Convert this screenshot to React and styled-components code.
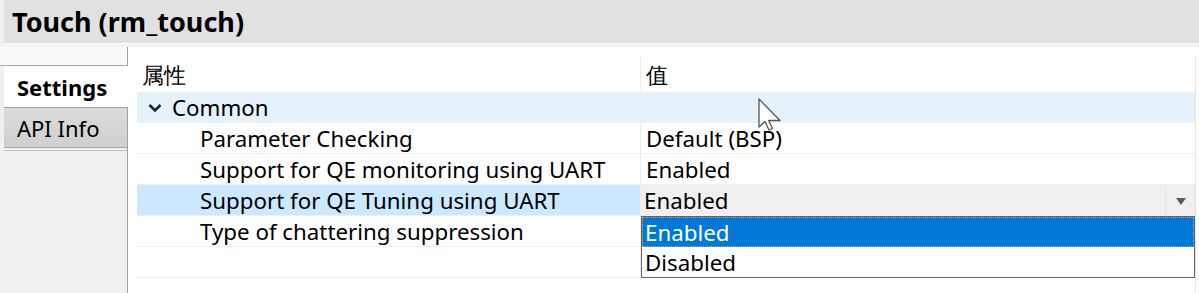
import styled, { createGlobalStyle } from "styled-components";

const GlobalStyle = createGlobalStyle`
  html, body {
    margin: 0;
    padding: 0;
    background: #f0f0f0;
  }
  * {
    box-sizing: border-box;
  }
`;

const Page = styled.div`
  position: relative;
  width: 1199px;
  height: 293px;
  overflow: hidden;
  background: #f0f0f0;
  padding-left: 4px;
  font-family: "Noto Sans", "Open Sans", sans-serif;
  color: #000;
  display: flex;
  flex-direction: column;
`;

const Header = styled.div`
  height: 44px;
  background: #e1e1e1;
  border-bottom: 1px solid #fbfbfb;
  display: flex;
  align-items: center;
  padding-left: 8px;
  flex-shrink: 0;
`;

const Title = styled.h1`
  margin: 0;
  font-size: 27px;
  font-weight: 700;
`;

const HeaderGap = styled.div`
  height: 3px;
  background: #f3f3f3;
  flex-shrink: 0;
  margin-left: -4px;
`;

const Body = styled.div`
  flex: 1;
  display: flex;
  margin-left: -4px;
`;

const Sidebar = styled.div`
  width: 128px;
  padding-left: 4px;
  border-right: 1px solid #a0a0a0;
  display: flex;
  flex-direction: column;
  background: #f0f0f0;
  flex-shrink: 0;
`;

const TabTop = styled.div`
  height: 19px;
  background: #fafafa;
  border-bottom: 1px solid #a8a8a8;
  margin-left: -4px;
`;

const Tab = styled.div`
  height: ${(p) => (p.$active ? "42px" : "40px")};
  display: flex;
  align-items: center;
  padding-left: 13px;
  font-size: 22px;
  font-weight: ${(p) => (p.$active ? 700 : 400)};
  background: ${(p) =>
    p.$active ? "#ffffff" : "linear-gradient(#dcdcdc, #cfcfcf)"};
  border-bottom: 1px solid #a8a8a8;
  margin-right: ${(p) => (p.$active ? "-1px" : "0")};
`;

const TabFoot = styled.div`
  height: 3px;
  border-bottom: 1px solid #c4c4c4;
`;

const Content = styled.div`
  flex: 1;
  background: #ffffff;
  padding: 9px 3px 0 9px;
`;

const Table = styled.div`
  position: relative;
  border-right: 1px solid #e3e3e3;
  height: 100%;
  display: flex;
  flex-direction: column;
`;

const Row = styled.div`
  display: grid;
  grid-template-columns: 503px 1fr;
  height: ${(p) => (p.$head ? "36px" : "31px")};
  border-bottom: 1px solid ${(p) => (p.$head ? "transparent" : "#efefef")};
  background: ${(p) => (p.$group ? "#e5f1fb" : "transparent")};
  font-size: 22.3px;
  line-height: 1;
`;

const Cell = styled.div`
  display: flex;
  align-items: center;
  padding-top: 2px;
  padding-left: ${(p) => p.$indent || 5}px;
  background: ${(p) => (p.$selected ? "#cce8ff" : "transparent")};
  border-left: ${(p) => (p.$value ? "1px solid #ececec" : "none")};
  white-space: nowrap;
`;

const HeadCell = styled(Cell)`
  align-items: flex-end;
  padding-bottom: 5px;
`;

const Chevron = styled.svg`
  width: 14px;
  height: 10px;
  margin-right: 10px;
`;

const Combo = styled.div`
  display: flex;
  background: #f0f0f0;
  border-left: 1px solid #ececec;
  margin-bottom: -1px;
`;

const ComboText = styled.div`
  flex: 1;
  display: flex;
  align-items: center;
  padding-top: 2px;
  padding-left: 3px;
`;

const ComboButton = styled.div`
  width: 30px;
  border-left: 1px solid #e6e6e6;
  display: flex;
  align-items: center;
  justify-content: center;
`;

const Arrow = styled.div`
  width: 0;
  height: 0;
  border-left: 5px solid transparent;
  border-right: 5px solid transparent;
  border-top: 7px solid #5a5a5a;
  margin-top: 2px;
`;

const List = styled.div`
  position: absolute;
  left: 504px;
  top: 160px;
  width: 554px;
  background: #ffffff;
  border: 1px solid #646464;
  display: flex;
  flex-direction: column;
  font-size: 22.3px;
  line-height: 1;
`;

const Option = styled.div`
  height: 30px;
  display: flex;
  align-items: center;
  padding-top: 3px;
  padding-left: 3px;
  background: ${(p) => (p.$selected ? "#0078d7" : "#ffffff")};
  color: ${(p) => (p.$selected ? "#ffffff" : "#000000")};
  outline: ${(p) => (p.$selected ? "1px dotted #e0a060" : "none")};
  outline-offset: -1px;
`;

const Cursor = styled.svg`
  position: absolute;
  left: 758px;
  top: 98px;
  width: 24px;
  height: 34px;
`;

const rows = [
  { name: "Parameter Checking", value: "Default (BSP)" },
  { name: "Support for QE monitoring using UART", value: "Enabled" },
  { name: "Support for QE Tuning using UART", value: "Enabled", selected: true },
  { name: "Type of chattering suppression", value: "" },
  { name: "", value: "" },
];

export default function App() {
  return (
    <>
      <GlobalStyle />
      <Page>
        <Header>
          <Title>Touch (rm_touch)</Title>
        </Header>
        <HeaderGap />
        <Body>
          <Sidebar>
            <TabTop />
            <Tab $active>Settings</Tab>
            <Tab>API Info</Tab>
            <TabFoot />
          </Sidebar>
          <Content>
            <Table>
              <Row $head>
                <HeadCell>属性</HeadCell>
                <HeadCell $value>值</HeadCell>
              </Row>
              <Row $group>
                <Cell $indent={11}>
                  <Chevron viewBox="0 0 14 10">
                    <path
                      d="M1.5 2 L7 7.5 L12.5 2"
                      fill="none"
                      stroke="#222"
                      strokeWidth="2.6"
                    />
                  </Chevron>
                  Common
                </Cell>
                <Cell $value />
              </Row>
              {rows.map((r, i) =>
                r.selected ? (
                  <Row key={i}>
                    <Cell $indent={63} $selected>
                      {r.name}
                    </Cell>
                    <Combo>
                      <ComboText>{r.value}</ComboText>
                      <ComboButton>
                        <Arrow />
                      </ComboButton>
                    </Combo>
                  </Row>
                ) : (
                  <Row key={i}>
                    <Cell $indent={63}>{r.name}</Cell>
                    <Cell $value>{r.value}</Cell>
                  </Row>
                )
              )}
              <List>
                <Option $selected>Enabled</Option>
                <Option>Disabled</Option>
              </List>
            </Table>
          </Content>
        </Body>
        <Cursor viewBox="0 0 24 34">
          <path
            d="M1 1 L1 29 L7 23.5 L11 32 L14.5 30.5 L10.5 22.5 L22 22.5 Z"
            fill="#ffffff"
            stroke="#555"
            strokeWidth="1.3"
            strokeLinejoin="round"
          />
        </Cursor>
      </Page>
    </>
  );
}
